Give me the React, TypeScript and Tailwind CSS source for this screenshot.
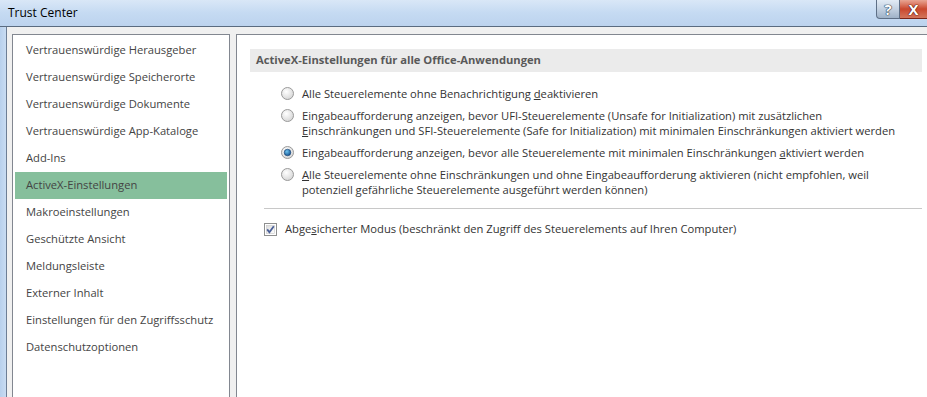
import React from 'react';

const navItems = [
  'Vertrauenswürdige Herausgeber',
  'Vertrauenswürdige Speicherorte',
  'Vertrauenswürdige Dokumente',
  'Vertrauenswürdige App-Kataloge',
  'Add-Ins',
  'ActiveX-Einstellungen',
  'Makroeinstellungen',
  'Geschützte Ansicht',
  'Meldungsleiste',
  'Externer Inhalt',
  'Einstellungen für den Zugriffsschutz',
  'Datenschutzoptionen',
];

const Radio = ({ checked }: { checked?: boolean }) => (
  <svg width="13" height="13" viewBox="0 0 13 13" className="shrink-0 mt-[1px]">
    <defs>
      <radialGradient id="rg" cx="0.4" cy="0.35" r="0.7">
        <stop offset="0" stopColor="#ffffff" />
        <stop offset="1" stopColor="#d4d4d4" />
      </radialGradient>
      <radialGradient id="dot" cx="0.4" cy="0.35" r="0.7">
        <stop offset="0" stopColor="#6ec3f0" />
        <stop offset="1" stopColor="#0d4c8a" />
      </radialGradient>
    </defs>
    <circle cx="6.5" cy="6.5" r="6" fill="url(#rg)" stroke="#9a9a9a" />
    {checked && <circle cx="6.5" cy="6.5" r="3.3" fill="url(#dot)" stroke="#1b3f6e" strokeWidth="0.6" />}
  </svg>
);

const Checkbox = () => (
  <svg width="13" height="13" viewBox="0 0 13 13" className="shrink-0">
    <defs>
      <linearGradient id="cb" x1="0" y1="0" x2="1" y2="1">
        <stop offset="0" stopColor="#dcdcdc" />
        <stop offset="1" stopColor="#ffffff" />
      </linearGradient>
    </defs>
    <rect x="0.5" y="0.5" width="12" height="12" fill="#fff" stroke="#8e8f8f" />
    <rect x="2.5" y="2.5" width="8" height="8" fill="url(#cb)" stroke="#c6c6c6" strokeWidth="0.6" />
    <path d="M3.2 6.4 L5.4 9.2 L9.8 3.2" fill="none" stroke="#4a5f97" strokeWidth="1.8" />
  </svg>
);

const App = () => {
  return (
    <div
      className="w-[927px] h-[397px] overflow-hidden flex flex-col bg-[#f0f0f0] text-[11.2px]"
      style={{ fontFamily: '"Open Sans", "Noto Sans", sans-serif' }}
    >
      {/* Title bar */}
      <div className="h-[27px] shrink-0 relative flex items-center bg-gradient-to-b from-[#d9e7f7] via-[#c5daf2] to-[#bcd3ee] border-b border-[#5a6b80]">
        <span className="pl-[8px] text-black text-[12px]">Trust Center</span>
        <div className="absolute top-0 right-0 flex h-[19px]">
          <div className="w-[24px] h-full flex items-center justify-center rounded-bl-[4px] border border-t-0 border-[#5e6f86] bg-gradient-to-b from-[#e2ebf5] via-[#c3d1e1] to-[#9fb2c8] text-white font-bold text-[15px] leading-none [text-shadow:0_0_1px_#1f2f45,0_0_1px_#1f2f45,0_0_1px_#1f2f45]">
            ?
          </div>
          <div className="w-[27px] h-full flex items-center justify-center border-b border-[#7a2418] bg-gradient-to-b from-[#e8a493] via-[#c9462d] to-[#d2755c] text-white font-bold text-[15px] leading-none [text-shadow:0_0_1px_#501206,0_0_1px_#501206,0_0_1px_#501206]">
            X
          </div>
        </div>
      </div>

      <div className="flex flex-1 min-h-0">
        {/* Window frame */}
        <div className="w-[7px] shrink-0 bg-gradient-to-r from-[#b8d0ec] to-[#c9dcf2] border-r border-[#6d7e95]" />

        <div className="flex flex-1 min-w-0 pt-[7px] pl-[5px] gap-[6px]">
          {/* Left navigation */}
          <div className="w-[218px] shrink-0 bg-white border border-[#828790] border-b-0 pt-[2px] px-[2px]">
            {navItems.map((item) => (
              <div
                key={item}
                className={`h-[27px] flex items-center pl-[11px] text-[#444] whitespace-nowrap ${
                  item === 'ActiveX-Einstellungen' ? 'bg-[#86bf9c]' : ''
                }`}
              >
                {item}
              </div>
            ))}
          </div>

          {/* Right content */}
          <div className="flex-1 min-w-0 bg-white border border-[#828790] border-r-0 border-b-0 pl-[13px] pt-[14px] pr-[5px]">
            <div className="h-[23px] flex items-center pl-[6px] bg-[#ebebeb] font-bold text-[#595959]">
              ActiveX-Einstellungen für alle Office-Anwendungen
            </div>

            <div className="flex flex-col gap-[7px] pl-[31px] pt-[14px] text-[#333] leading-[15px] whitespace-nowrap">
              <div className="flex gap-[8px]">
                <Radio />
                <span>
                  Alle Steuerelemente ohne Benachrichtigung <u>d</u>eaktivieren
                </span>
              </div>
              <div className="flex gap-[8px]">
                <Radio />
                <span>
                  Eingabeaufforderung anzeigen, bevor UFI-Steuerelemente (Unsafe for Initialization) mit zusätzlichen
                  <br />
                  <u>E</u>inschränkungen und SFI-Steuerelemente (Safe for Initialization) mit minimalen Einschränkungen aktiviert werden
                </span>
              </div>
              <div className="flex gap-[8px]">
                <Radio checked />
                <span>
                  Eingabeaufforderung anzeigen, bevor alle Steuerelemente mit minimalen Einschränkungen <u>a</u>ktiviert werden
                </span>
              </div>
              <div className="flex gap-[8px]">
                <Radio />
                <span>
                  <u>A</u>lle Steuerelemente ohne Einschränkungen und ohne Eingabeaufforderung aktivieren (nicht empfohlen, weil
                  <br />
                  potenziell gefährliche Steuerelemente ausgeführt werden können)
                </span>
              </div>
            </div>

            <div className="ml-[14px] mt-[11px] border-t border-[#c8c8c8]" />

            <div className="flex items-center gap-[8px] pl-[14px] pt-[12px] text-[#333] whitespace-nowrap">
              <Checkbox />
              <span>
                Abge<u>s</u>icherter Modus (beschränkt den Zugriff des Steuerelements auf Ihren Computer)
              </span>
            </div>
          </div>
        </div>
      </div>
    </div>
  );
};

export default App;
